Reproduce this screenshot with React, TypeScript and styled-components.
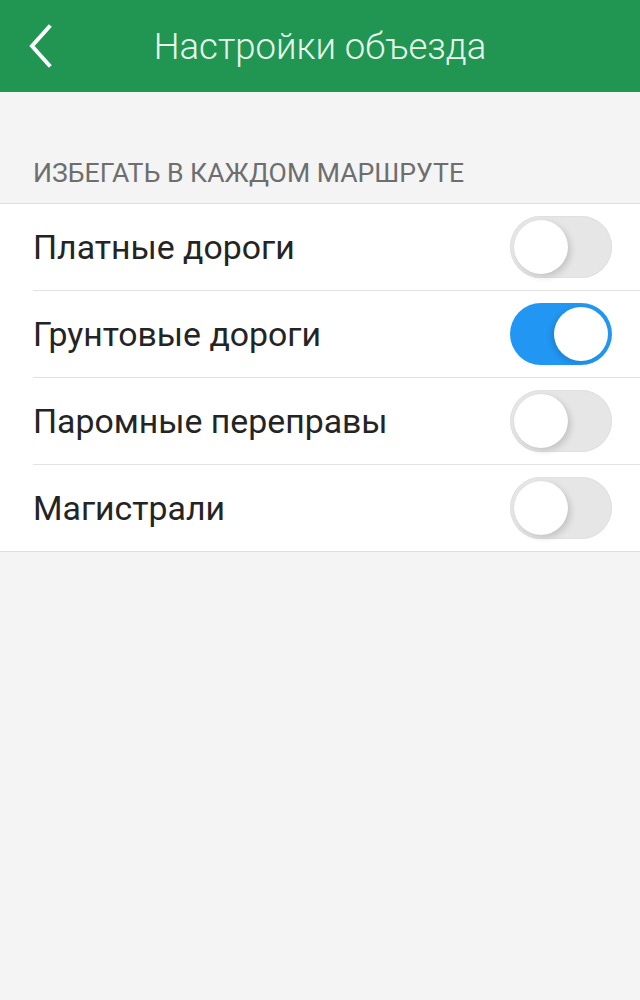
import React, { useState } from "react";
import styled, { createGlobalStyle } from "styled-components";

const GlobalStyle = createGlobalStyle`
  html, body {
    margin: 0;
    padding: 0;
    background: #f4f4f4;
    font-family: Roboto, "Noto Sans", sans-serif;
  }
`;

const Page = styled.div`
  width: 640px;
  min-height: 1000px;
  background: #f4f4f4;
`;

const TopBar = styled.header`
  height: 92px;
  background: #219653;
  display: grid;
  grid-template-columns: 92px 1fr 92px;
  align-items: center;
`;

const BackButton = styled.button`
  border: none;
  background: transparent;
  padding: 0 0 0 28px;
  height: 92px;
  display: flex;
  align-items: center;
  cursor: pointer;
`;

const Title = styled.h1`
  margin: 0;
  text-align: center;
  font-family: Roboto, sans-serif;
  font-weight: 300;
  font-size: 36.5px;
  color: #e9f6ec;
  letter-spacing: 0;
`;

const SectionLabel = styled.div`
  padding: 63px 33px 12px;
  font-family: Roboto, sans-serif;
  font-size: 26.6px;
  font-weight: 400;
  line-height: 36px;
  color: #6e6e6e;
  text-transform: uppercase;
`;

const List = styled.ul`
  margin: 0;
  padding: 0 0 0 33px;
  list-style: none;
  background: #fff;
  border-top: 1px solid #dedede;
  border-bottom: 1px solid #dedede;
`;

const Row = styled.li<{ $last?: boolean }>`
  height: 86px;
  display: flex;
  align-items: center;
  justify-content: space-between;
  padding-right: 28px;
  border-bottom: ${(p) => (p.$last ? "none" : "1px solid #e2e2e2")};
`;

const RowLabel = styled.span`
  font-family: Roboto, sans-serif;
  font-size: 33.8px;
  color: #242424;
`;

const Track = styled.button<{ $on: boolean }>`
  position: relative;
  width: 102px;
  height: 62px;
  border-radius: 31px;
  border: none;
  padding: 0;
  cursor: pointer;
  background: ${(p) => (p.$on ? "#2196f3" : "#e6e6e6")};
  box-shadow: ${(p) => (p.$on ? "none" : "inset 0 0 0 1px #e0e0e0")};
  transition: background 0.2s;
`;

const Knob = styled.span<{ $on: boolean }>`
  position: absolute;
  top: 4px;
  left: ${(p) => (p.$on ? "44px" : "4px")};
  width: 54px;
  height: 54px;
  border-radius: 50%;
  background: #fff;
  box-shadow: ${(p) =>
    p.$on
      ? "-3px 2px 5px rgba(0,0,0,0.12)"
      : "3px 3px 6px rgba(0,0,0,0.14), 0 0 1px rgba(0,0,0,0.1)"};
  transition: left 0.2s;
`;

function Toggle({ on, onChange }: { on: boolean; onChange: () => void }) {
  return (
    <Track $on={on} onClick={onChange} aria-pressed={on}>
      <Knob $on={on} />
    </Track>
  );
}

const items = [
  { label: "Платные дороги", on: false },
  { label: "Грунтовые дороги", on: true },
  { label: "Паромные переправы", on: false },
  { label: "Магистрали", on: false },
];

export default function App() {
  const [state, setState] = useState(items.map((i) => i.on));
  return (
    <Page>
      <GlobalStyle />
      <TopBar>
        <BackButton aria-label="Назад">
          <svg width="26" height="44" viewBox="0 0 26 44">
            <path
              d="M21 3 L4 22 L21 41"
              fill="none"
              stroke="#fff"
              strokeWidth="4"
              strokeLinecap="square"
            />
          </svg>
        </BackButton>
        <Title>Настройки объезда</Title>
        <span />
      </TopBar>
      <SectionLabel>Избегать в каждом маршруте</SectionLabel>
      <List>
        {items.map((it, i) => (
          <Row key={it.label} $last={i === items.length - 1}>
            <RowLabel>{it.label}</RowLabel>
            <Toggle
              on={state[i]}
              onChange={() =>
                setState((s) => s.map((v, j) => (j === i ? !v : v)))
              }
            />
          </Row>
        ))}
      </List>
    </Page>
  );
}
